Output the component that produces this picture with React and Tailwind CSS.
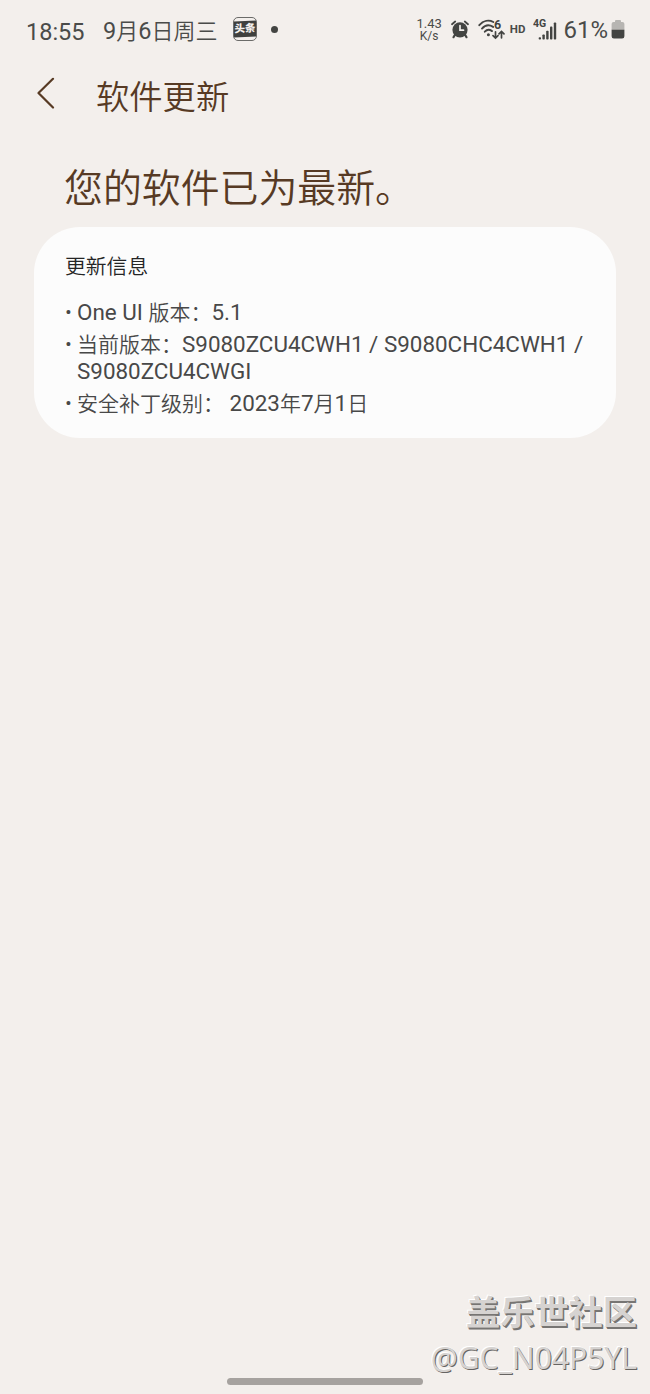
import { useState } from "react";

const updateInfo = [
  { id: "oneui", lines: ["One UI 版本：5.1"] },
  { id: "current", lines: ["当前版本：S9080ZCU4CWH1 / S9080CHC4CWH1 /", "S9080ZCU4CWGI"] },
  { id: "patch", lines: ["安全补丁级别： 2023年7月1日"] },
];

function NewsIcon() {
  return (
    <div className="flex h-6 w-6 items-center rounded-[5px] border border-[#6b6b69]">
      <div className="flex h-4 w-full -skew-y-3 items-center justify-center bg-[#3f403e] text-[10.5px] leading-none font-black text-[#f3efec]">
        头条
      </div>
    </div>
  );
}

function AlarmIcon() {
  return (
    <svg width="18" height="19" viewBox="0 0 18 19" fill="none" stroke="#434442" strokeLinecap="round">
      <circle cx="9" cy="9.8" r="7.6" fill="#434442" stroke="none" />
      <path d="M1 4.2 4.2 1.5M13.8 1.5 17 4.2" strokeWidth="1.8" />
      <path d="M3.8 15 2.5 17.2M14.2 15l1.3 2.2" strokeWidth="2.2" />
      <path d="M9 5.6v4.6h3.5" stroke="#f3efec" strokeWidth="1.7" />
    </svg>
  );
}

function WifiIcon() {
  return (
    <svg width="27" height="29" viewBox="0 -4 27 29" fill="none" stroke="#434442" strokeLinecap="round" strokeWidth="1.9">
      <path d="M1.3 6.2C5.4 1.4 11 .7 15.3 3" />
      <path d="M4 9.6c3-3.4 7.3-4 11.1-1.7" />
      <path d="M6.8 12.7c2-2.1 4.8-2.3 7.2-.6" />
      <circle cx="10.4" cy="15.8" r="1.5" fill="#434442" stroke="none" />
      <text x="16" y="9.8" fontSize="12.5" fontWeight="700" fill="#434442" stroke="none">6</text>
      <path d="M17.5 12.8v6M15 16.6l2.5 2.4 2.5-2.4M23.5 18.8v-6M21 14.8l2.5-2.4 2.5 2.4" strokeWidth="1.7" />
    </svg>
  );
}

function SignalIcon() {
  return (
    <svg width="25" height="28" viewBox="0 -3 25 28" fill="#434442">
      <text x="0" y="8.3" fontSize="10.5" fontWeight="700">4G</text>
      <rect x="5.7" y="18.2" width="2.3" height="2.3" rx=".8" />
      <rect x="9.4" y="15.4" width="2.4" height="5.2" rx=".8" />
      <rect x="13.2" y="11.8" width="2.4" height="8.8" rx=".8" />
      <rect x="17" y="7.6" width="2.4" height="13" rx=".8" />
      <rect x="20.8" y="3.4" width="2.4" height="17.2" rx=".8" />
    </svg>
  );
}

function BatteryIcon() {
  return (
    <svg width="14" height="19" viewBox="0 0 14 19">
      <path d="M4 2V1a1 1 0 0 1 1-1h4a1 1 0 0 1 1 1v1h1.4a2 2 0 0 1 2 2v6H.6V4a2 2 0 0 1 2-2z" fill="#b7b5b2" />
      <path d="M.6 9.7h12.8V16.2a2.3 2.3 0 0 1-2.3 2.3H2.9A2.3 2.3 0 0 1 .6 16.2z" fill="#434442" />
    </svg>
  );
}

// Latin runs are set slightly larger than the Chinese text around them.
function MixedText({ text }) {
  return text.split(/([\x20-\x7e]+)/).map((part, i) =>
    i % 2 ? (
      <span key={i} className="text-[1.068em] font-normal">{part}</span>
    ) : (
      part
    )
  );
}

function StatusBar() {
  return (
    <div className="flex h-[62px] items-center pr-[25px] pl-[26px] text-[#4a4b49]">
      <span className="mt-[3px] w-[77px] text-[23.5px] whitespace-nowrap">18:55</span>
      <span className="mt-[2px] w-[130px] text-[22px] font-[350] whitespace-nowrap">
        <MixedText text="9月6日周三" />
      </span>
      <div className="mb-1">
        <NewsIcon />
      </div>
      <span className="mb-1 ml-[14px] h-[7px] w-[7px] rounded-full bg-[#434442]" />
      <div className="mb-[3px] ml-auto flex items-center">
        <div className="mr-[9px] text-center text-[12px] leading-[12px]">
          <div className="text-[13px]">1.43</div>
          <div>K/s</div>
        </div>
        <AlarmIcon />
        <div className="ml-[9px]">
          <WifiIcon />
        </div>
        <span className="ml-[5px] text-[11.5px] font-bold">HD</span>
        <div className="ml-[8px]">
          <SignalIcon />
        </div>
        <span className="ml-[5px] text-[24px]">61%</span>
        <div className="ml-[3px]">
          <BatteryIcon />
        </div>
      </div>
    </div>
  );
}

function Header({ title }) {
  return (
    <header className="flex h-[66px] items-center pl-[36px] text-[#573a24]">
      <button type="button" aria-label="返回" className="mb-1 w-[60px]">
        <svg width="20" height="32" viewBox="0 0 20 32" fill="none" stroke="#573a24" strokeWidth="2.2" strokeLinecap="round" strokeLinejoin="round">
          <path d="M17 1.8 2.5 16 17 30.5" />
        </svg>
      </button>
      <h1 className="mt-[5px] text-[33.3px] leading-none font-[350]">{title}</h1>
    </header>
  );
}

function InfoCard({ items }) {
  return (
    <section className="mx-[34px] mt-[13px] h-[211px] rounded-[46px] bg-[#fcfcfc] px-[31px] pt-[28px]">
      <h3 className="text-[20.8px] leading-[24px] font-[350] text-[#252525]">更新信息</h3>
      <ul className="mt-[20px] flex flex-col gap-[5px] text-[21px] leading-[27px] font-[350] text-[#484848]">
        {items.map((item) => (
          <li key={item.id} className="flex">
            <span className="w-[12px] shrink-0">•</span>
            <div className="whitespace-nowrap">
              {item.lines.map((line) => (
                <p key={line} className="h-[27px]">
                  <MixedText text={line} />
                </p>
              ))}
            </div>
          </li>
        ))}
      </ul>
    </section>
  );
}

function Watermark() {
  return (
    <div className="mt-auto -mb-[2px] flex flex-col items-end pr-[13px] text-[#d6d3d1]">
      <p className="text-[34.2px] leading-[46px] font-bold [text-shadow:1px_1px_0_#777573,1.5px_2px_0_#777573,-1px_-1px_0_#fff]">盖乐世社区</p>
      <p className="font-['Noto_Sans','Noto_Sans_CJK_SC',sans-serif] text-[30px] leading-[44px] [text-shadow:1px_1px_0_#666462,-1px_-1px_0_#fff]">
        @GC_N04P5YL
      </p>
    </div>
  );
}

export default function App() {
  const [items] = useState(updateInfo);

  return (
    <div className="flex h-[1394px] w-[650px] flex-col overflow-hidden bg-[#f3efec] font-['Roboto','Noto_Sans_CJK_SC',sans-serif]">
      <StatusBar />
      <Header title="软件更新" />
      <h2 className="mt-[36px] pl-[64px] text-[38.9px] leading-[50px] font-[350] text-[#573a24]">您的软件已为最新。</h2>
      <InfoCard items={items} />
      <Watermark />
      <div className="mb-[9px] ml-[227px] h-[7px] w-[196px] shrink-0 rounded-full bg-[#a6a29f]" />
    </div>
  );
}
